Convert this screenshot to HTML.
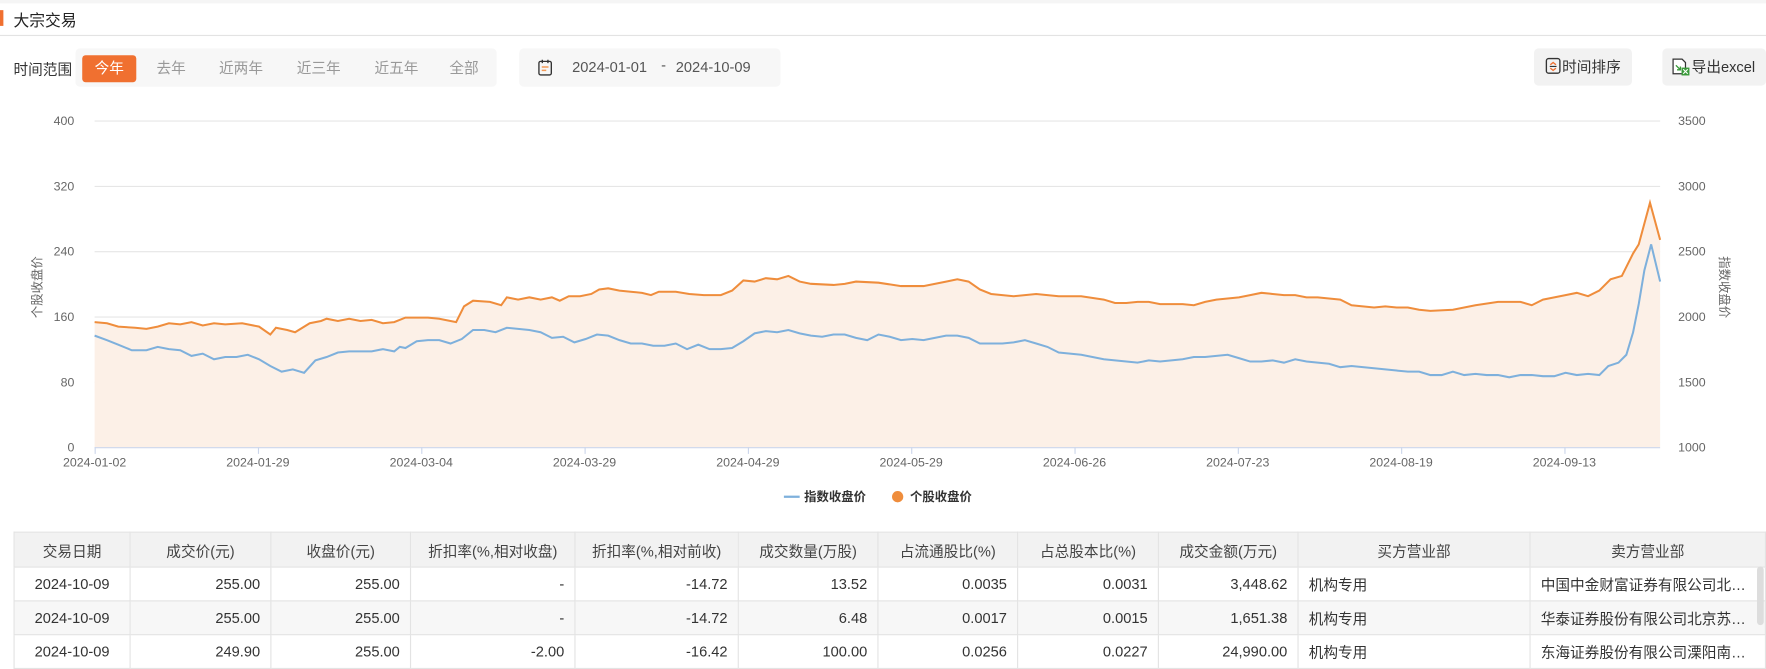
<!DOCTYPE html>
<html><head><meta charset="utf-8">
<style>
html,body{margin:0;padding:0;background:#fff;overflow:hidden;width:1766px;height:668px}
*{box-sizing:border-box}
#w{position:absolute;left:0;top:0;width:1568px;height:593px;transform:scale(1.12628);transform-origin:0 0;font-family:"Liberation Sans","Noto Sans CJK SC",sans-serif;color:#333}
.a{position:absolute}
.tab{position:absolute;top:49px;height:24px;line-height:24px;font-size:13px;color:#999;text-align:center}
table{border-collapse:collapse;font-size:13px;color:#333;table-layout:fixed}
td,th{border:1px solid #e3e3e3;height:30px;padding:0 9px;white-space:nowrap;overflow:hidden;text-overflow:ellipsis}
th{background:#f2f2f2;font-weight:normal;color:#444;height:31px}
td{text-align:right}
td.c{text-align:center}td.l{text-align:left}
tr.g td{background:#f7f7f7}
</style></head><body><div id="w">
<div class="a" style="left:0;top:0;width:1568px;height:3px;background:#f5f5f5"></div>
<div class="a" style="left:0;top:9px;width:3px;height:14px;background:#f07030"></div>
<div class="a" style="left:12px;top:8px;font-size:14px;color:#222">大宗交易</div>
<div class="a" style="left:0;top:31px;width:1568px;height:1px;background:#e3e3e3"></div>
<div class="a" style="left:12px;top:51px;font-size:13px;color:#333">时间范围</div>
<div class="a" style="left:67px;top:43px;width:374px;height:34px;background:#f7f7f7;border-radius:4px"></div>
<div class="tab" style="left:73px;width:48px;background:#f07030;color:#fff;border-radius:3px">今年</div>
<div class="tab" style="left:130px;width:44px">去年</div>
<div class="tab" style="left:188px;width:52px">近两年</div>
<div class="tab" style="left:257px;width:52px">近三年</div>
<div class="tab" style="left:326px;width:52px">近五年</div>
<div class="tab" style="left:392px;width:40px">全部</div>
<div class="a" style="left:461px;top:43px;width:232px;height:34px;background:#f7f7f7;border-radius:4px"></div>
<svg class="a" style="left:477px;top:52px" width="14" height="16" viewBox="0 0 14 16"><rect x="1.5" y="2.5" width="11" height="12" rx="1.5" fill="none" stroke="#333" stroke-width="1.2"/><line x1="4.5" y1="1" x2="4.5" y2="4" stroke="#333" stroke-width="1.2"/><line x1="9.5" y1="1" x2="9.5" y2="4" stroke="#333" stroke-width="1.2"/><line x1="4" y1="7.5" x2="10" y2="7.5" stroke="#f39a57" stroke-width="1.4"/><line x1="4" y1="10.5" x2="8" y2="10.5" stroke="#f39a57" stroke-width="1.4"/></svg>
<div class="a" style="left:508px;top:52px;font-size:13px;color:#555">2024-01-01</div>
<div class="a" style="left:587px;top:50px;font-size:13px;color:#555">-</div>
<div class="a" style="left:600px;top:52px;font-size:13px;color:#555">2024-10-09</div>
<div class="a" style="left:1362px;top:43px;width:87px;height:33px;background:#f2f2f2;border-radius:4px"></div>
<svg class="a" style="left:1372px;top:51px" width="15" height="16" viewBox="0 0 15 16"><rect x="1" y="1" width="12" height="13" rx="2" fill="none" stroke="#333" stroke-width="1.2"/><path d="M4.5 6.5L7 4.5 9.5 6.5" fill="none" stroke="#f07030" stroke-width="1.2"/><line x1="4" y1="8" x2="10" y2="8" stroke="#333" stroke-width="1"/><path d="M4.5 9.5L7 11.5 9.5 9.5" fill="none" stroke="#f07030" stroke-width="1.2"/></svg>
<div class="a" style="left:1387px;top:49px;font-size:13px;color:#333">时间排序</div>
<div class="a" style="left:1476px;top:43px;width:92px;height:33px;background:#f2f2f2;border-radius:4px"></div>
<svg class="a" style="left:1484px;top:51px" width="18" height="17" viewBox="0 0 18 17"><path d="M1.5 1.5h8l3 3v10h-11z" fill="#fff" stroke="#333" stroke-width="1.1"/><path d="M4 7l4 4M8 8v3H5" fill="none" stroke="#3a9a3a" stroke-width="1.2"/><rect x="9" y="9" width="7" height="7" fill="#3a9a3a"/><path d="M10.5 10.5l4 4M14.5 10.5l-4 4" stroke="#fff" stroke-width="1"/></svg>
<div class="a" style="left:1502px;top:49px;font-size:13px;color:#333">导出excel</div>

<svg class="a" style="left:0;top:95px" width="1568" height="360" viewBox="0 95 1568 360" font-family="Liberation Sans,Noto Sans CJK SC,sans-serif" font-size="11" fill="#666">
<g stroke="#e6e6e6" stroke-width="1">
<line x1="84" y1="107.5" x2="1474" y2="107.5"/><line x1="84" y1="165.5" x2="1474" y2="165.5"/><line x1="84" y1="223.5" x2="1474" y2="223.5"/><line x1="84" y1="281.5" x2="1474" y2="281.5"/><line x1="84" y1="339.5" x2="1474" y2="339.5"/>
</g>
<g text-anchor="end"><text x="66" y="111">400</text><text x="66" y="169">320</text><text x="66" y="227">240</text><text x="66" y="285">160</text><text x="66" y="343">80</text><text x="66" y="401">0</text></g>
<g><text x="1490" y="111">3500</text><text x="1490" y="169">3000</text><text x="1490" y="227">2500</text><text x="1490" y="285">2000</text><text x="1490" y="343">1500</text><text x="1490" y="401">1000</text></g>
<text transform="translate(37,255) rotate(-90)" text-anchor="middle" font-size="11">个股收盘价</text>
<text transform="translate(1527,255) rotate(90)" text-anchor="middle" font-size="11">指数收盘价</text>
<polygon fill="#fcf0e7" points="84,397 84,286 95,287 105,290 120,291 130,292 140,290 150,287 160,288 170,286 180,289 190,287 200,288 215,287 230,290 240,297 245,291 255,293 262,295 275,287 285,285 290,283 300,285 310,283 320,285 330,284 340,287 350,286 360,282 370,282 380,282 390,283 400,285 405,286 412,272 420,267 435,268 445,271 450,264 460,266 470,264 480,266 490,264 497,267 505,263 515,263 525,261 532,257 540,256 550,258 560,259 570,260 578,262 585,259 600,259 612,261 625,262 640,262 650,258 660,249 670,250 680,247 690,248 700,245 710,250 720,252 740,253 750,252 760,250 780,251 800,254 820,254 840,250 850,248 860,250 870,257 880,261 900,263 920,261 940,263 960,263 980,266 990,269 1000,269 1010,268 1020,268 1030,270 1040,270 1050,270 1060,271 1070,268 1080,266 1090,265 1100,264 1110,262 1120,260 1130,261 1140,262 1150,262 1160,264 1170,264 1180,265 1190,266 1200,271 1210,272 1220,273 1230,272 1240,273 1250,273 1260,275 1270,276 1290,275 1310,271 1330,268 1350,268 1360,271 1370,266 1380,264 1390,262 1400,260 1410,263 1420,258 1430,248 1440,245 1450,225 1455,217 1465,180 1474,213 1474,397"/>
<line x1="84" y1="397.5" x2="1474" y2="397.5" stroke="#ccd6eb"/>
<g stroke="#ccd6eb"><line x1="84.5" y1="397" x2="84.5" y2="403"/><line x1="229.5" y1="397" x2="229.5" y2="403"/><line x1="374.5" y1="397" x2="374.5" y2="403"/><line x1="519.5" y1="397" x2="519.5" y2="403"/><line x1="664.5" y1="397" x2="664.5" y2="403"/><line x1="809.5" y1="397" x2="809.5" y2="403"/><line x1="954.5" y1="397" x2="954.5" y2="403"/><line x1="1099.5" y1="397" x2="1099.5" y2="403"/><line x1="1244.5" y1="397" x2="1244.5" y2="403"/><line x1="1389.5" y1="397" x2="1389.5" y2="403"/></g>
<g text-anchor="middle"><text x="84" y="414">2024-01-02</text><text x="229" y="414">2024-01-29</text><text x="374" y="414">2024-03-04</text><text x="519" y="414">2024-03-29</text><text x="664" y="414">2024-04-29</text><text x="809" y="414">2024-05-29</text><text x="954" y="414">2024-06-26</text><text x="1099" y="414">2024-07-23</text><text x="1244" y="414">2024-08-19</text><text x="1389" y="414">2024-09-13</text></g>
<polyline fill="none" stroke="#7eb0dc" stroke-width="1.8" points="84,298 95,302 105,306 117,311 130,311 140,308 150,310 160,311 170,316 180,314 190,319 200,317 210,317 220,315 230,319 240,325 250,330 260,328 270,331 280,320 290,317 300,313 310,312 320,312 330,312 340,310 350,312 355,308 360,309 370,303 380,302 390,302 400,305 410,301 420,293 430,293 440,295 450,291 460,292 470,293 480,295 490,300 500,299 510,304 520,301 530,297 540,298 550,302 560,305 570,305 580,307 590,307 600,305 610,310 620,306 630,310 640,310 650,309 660,303 670,296 680,294 690,295 700,293 710,296 720,298 730,299 740,297 750,297 760,300 770,302 780,297 790,299 800,302 810,301 820,302 830,300 840,298 850,298 860,300 870,305 880,305 890,305 900,304 910,302 920,305 930,308 940,313 950,314 960,315 970,317 980,319 990,320 1000,321 1010,322 1020,320 1030,321 1040,320 1050,319 1060,317 1070,317 1080,316 1090,315 1100,318 1110,321 1120,321 1130,320 1140,322 1150,319 1160,321 1170,322 1180,323 1190,326 1200,325 1210,326 1220,327 1230,328 1240,329 1250,330 1260,330 1270,333 1280,333 1290,330 1300,333 1310,332 1320,333 1330,333 1340,335 1350,333 1360,333 1370,334 1380,334 1390,331 1400,333 1410,332 1420,333 1428,325 1437,322 1444,315 1450,295 1455,270 1460,240 1466,217 1474,250"/>
<polyline fill="none" stroke="#ef8d3c" stroke-width="1.8" points="84,286 95,287 105,290 120,291 130,292 140,290 150,287 160,288 170,286 180,289 190,287 200,288 215,287 230,290 240,297 245,291 255,293 262,295 275,287 285,285 290,283 300,285 310,283 320,285 330,284 340,287 350,286 360,282 370,282 380,282 390,283 400,285 405,286 412,272 420,267 435,268 445,271 450,264 460,266 470,264 480,266 490,264 497,267 505,263 515,263 525,261 532,257 540,256 550,258 560,259 570,260 578,262 585,259 600,259 612,261 625,262 640,262 650,258 660,249 670,250 680,247 690,248 700,245 710,250 720,252 740,253 750,252 760,250 780,251 800,254 820,254 840,250 850,248 860,250 870,257 880,261 900,263 920,261 940,263 960,263 980,266 990,269 1000,269 1010,268 1020,268 1030,270 1040,270 1050,270 1060,271 1070,268 1080,266 1090,265 1100,264 1110,262 1120,260 1130,261 1140,262 1150,262 1160,264 1170,264 1180,265 1190,266 1200,271 1210,272 1220,273 1230,272 1240,273 1250,273 1260,275 1270,276 1290,275 1310,271 1330,268 1350,268 1360,271 1370,266 1380,264 1390,262 1400,260 1410,263 1420,258 1430,248 1440,245 1450,225 1455,217 1465,180 1474,213"/>
<line x1="696" y1="441" x2="710" y2="441" stroke="#7eb0dc" stroke-width="2"/>
<text x="714" y="445" fill="#333" font-weight="bold" font-size="11">指数收盘价</text>
<circle cx="797" cy="441" r="5" fill="#ef8d3c"/>
<text x="808" y="445" fill="#333" font-weight="bold" font-size="11">个股收盘价</text>
</svg>

<table class="a" style="left:12px;top:472px;width:1555px">
<colgroup><col style="width:103px"><col style="width:125px"><col style="width:124px"><col style="width:146px"><col style="width:145px"><col style="width:124px"><col style="width:124px"><col style="width:125px"><col style="width:124px"><col style="width:206px"><col style="width:209px"></colgroup>
<tr><th>交易日期</th><th>成交价(元)</th><th>收盘价(元)</th><th>折扣率(%,相对收盘)</th><th>折扣率(%,相对前收)</th><th>成交数量(万股)</th><th>占流通股比(%)</th><th>占总股本比(%)</th><th>成交金额(万元)</th><th>买方营业部</th><th>卖方营业部</th></tr>
<tr><td class="c">2024-10-09</td><td>255.00</td><td>255.00</td><td>-</td><td>-14.72</td><td>13.52</td><td>0.0035</td><td>0.0031</td><td>3,448.62</td><td class="l">机构专用</td><td class="l">中国中金财富证券有限公司北京...</td></tr>
<tr class="g"><td class="c">2024-10-09</td><td>255.00</td><td>255.00</td><td>-</td><td>-14.72</td><td>6.48</td><td>0.0017</td><td>0.0015</td><td>1,651.38</td><td class="l">机构专用</td><td class="l">华泰证券股份有限公司北京苏州街</td></tr>
<tr><td class="c">2024-10-09</td><td>249.90</td><td>255.00</td><td>-2.00</td><td>-16.42</td><td>100.00</td><td>0.0256</td><td>0.0227</td><td>24,990.00</td><td class="l">机构专用</td><td class="l">东海证券股份有限公司溧阳南大街</td></tr>
</table>
<div class="a" style="left:1560px;top:503px;width:6px;height:52px;background:#ddd;border-radius:3px"></div>
</div></body></html>
